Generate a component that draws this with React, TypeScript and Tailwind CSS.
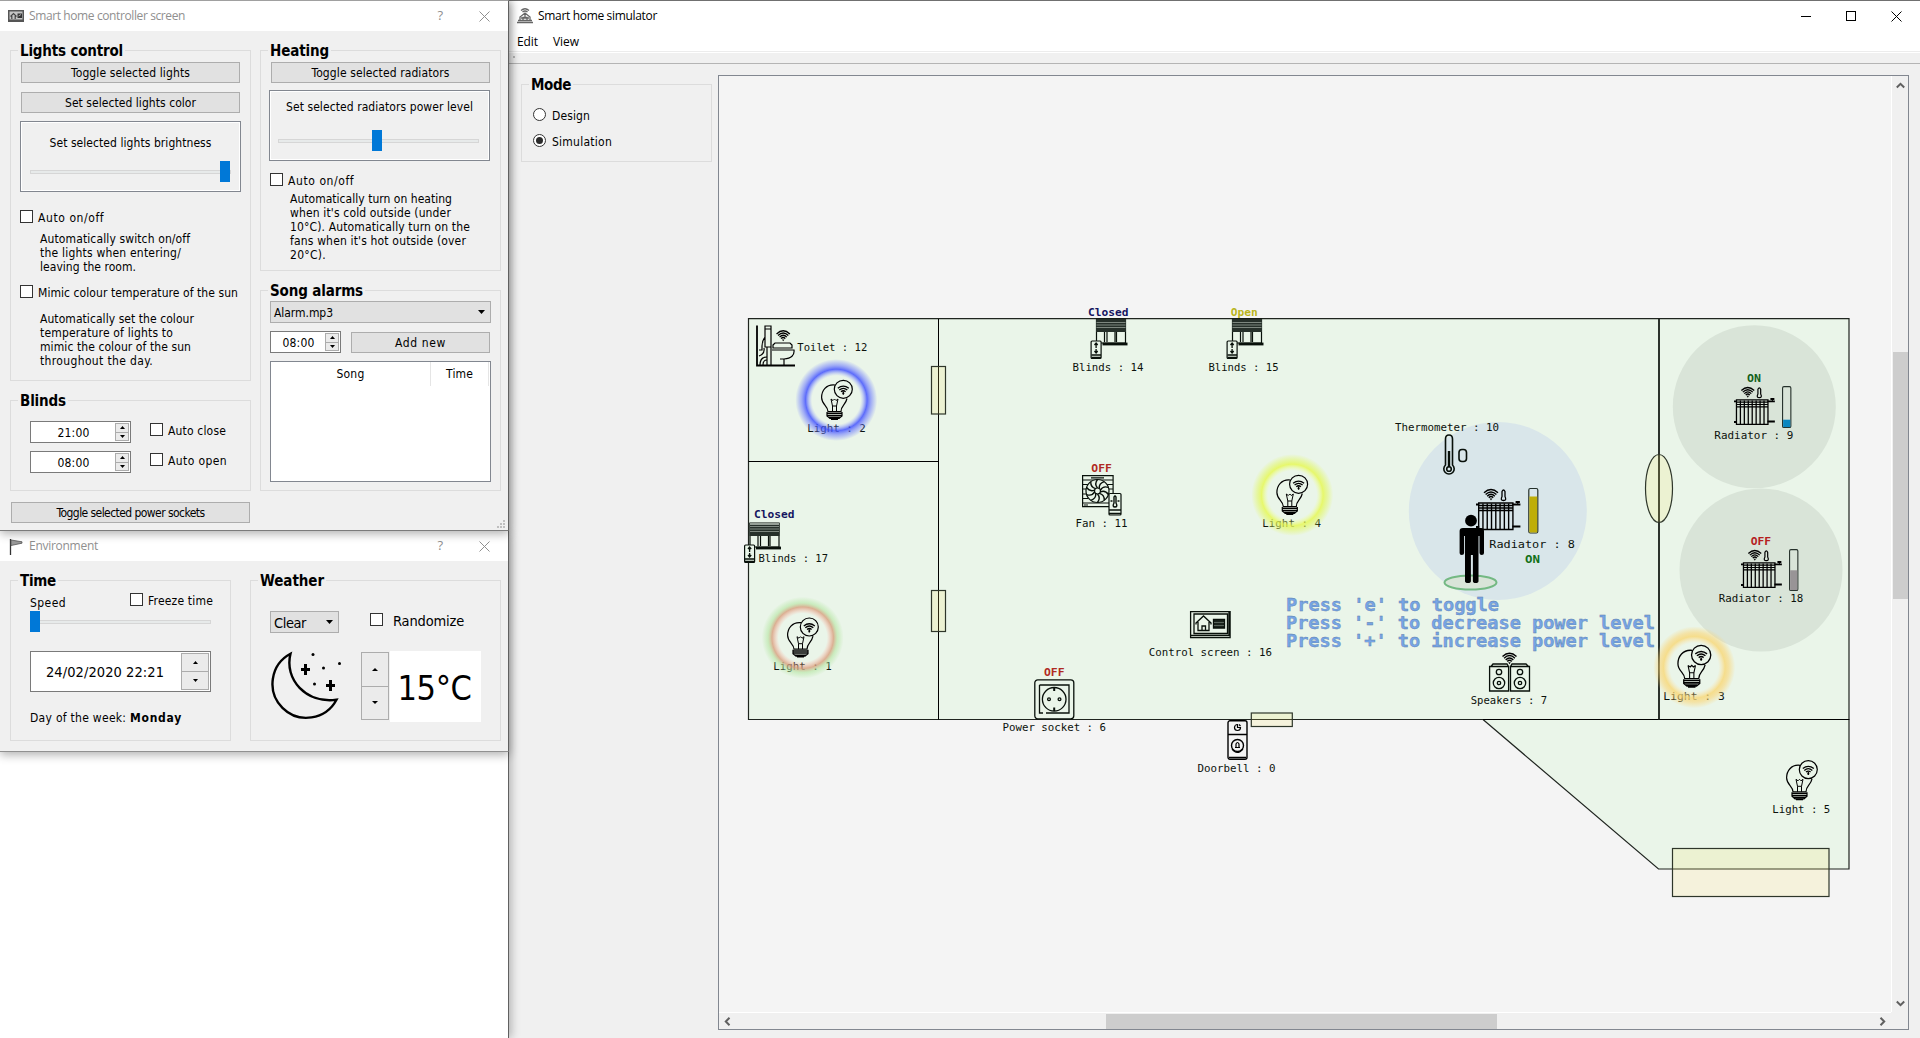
import React, { useLayoutEffect, useRef, useState } from 'react';

type Kids = { children?: React.ReactNode };

/* Text run tracked so that it fills a given width, like the hinted system font. */
function Fit({ w, className = '', children }: { w: number; className?: string; children: string }) {
  const ref = useRef<HTMLSpanElement>(null);
  const [sp, setSp] = useState(0);
  useLayoutEffect(() => {
    const el = ref.current;
    if (!el) return;
    el.style.letterSpacing = '0px';
    const nat = el.getBoundingClientRect().width;
    setSp((w - nat) / children.length);
    el.style.letterSpacing = `${(w - nat) / children.length}px`;
  }, [w, children]);
  return (
    <span ref={ref} style={{ letterSpacing: `${sp}px` }} className={`inline-block whitespace-pre ${className}`}>
      {children}
    </span>
  );
}

function Group({ title, w, className = '', children }: Kids & { title: string; w: number; className?: string }) {
  return (
    <section className={`flex flex-col items-start border border-[#dcdcdc] ${className}`}>
      <h2 className="-mt-[10px] ml-[7px] flex h-[20px] items-center bg-[#f0f0f0] px-[2px] text-[15px] font-bold leading-[20px]">
        <Fit w={w}>{title}</Fit>
      </h2>
      {children}
    </section>
  );
}

function Button({ w, className = '', children }: { w: number; className?: string; children: string }) {
  return (
    <button className={`flex h-[21px] items-center justify-center border border-[#adadad] bg-[#e1e1e1] pt-[2px] leading-[17px] ${className}`}>
      <Fit w={w}>{children}</Fit>
    </button>
  );
}

function Check({ w, className = '', gap = 'gap-[5px]', children }: { w: number; className?: string; gap?: string; children: string }) {
  return (
    <label className={`flex h-[13px] items-center ${gap} ${className}`}>
      <span className="size-[13px] shrink-0 border border-[#333] bg-white" />
      <Fit w={w} className="pt-[3px] leading-[15px]">{children}</Fit>
    </label>
  );
}

function Radio({ w, on, className = '', children }: { w: number; on?: boolean; className?: string; children: string }) {
  return (
    <label className={`flex h-[13px] items-center gap-[6px] ${className}`}>
      <span className="flex size-[13px] items-center justify-center rounded-full border border-[#333] bg-white">
        {on && <span className="size-[7px] rounded-full bg-[#2b2b2b]" />}
      </span>
      <Fit w={w} className="pt-[3px] leading-[15px]">{children}</Fit>
    </label>
  );
}

function Tri({ up, s = 5 }: { up?: boolean; s?: number }) {
  return (
    <svg width={s} height={3} viewBox="0 0 6 3" preserveAspectRatio="none">
      <path d={up ? 'M0 3h6L3 0z' : 'M0 0h6L3 3z'} fill="#000" />
    </svg>
  );
}

function Steps({ className = '', big }: { className?: string; big?: boolean }) {
  return (
    <div className={`flex flex-col border border-[#acacac] bg-[#ebebeb] ${className}`}>
      <div className="flex flex-1 items-center justify-center border-b border-[#acacac]"><Tri up s={big ? 6 : 5} /></div>
      <div className="flex flex-1 items-center justify-center"><Tri s={big ? 6 : 5} /></div>
    </div>
  );
}

function Spin({ className = '', children }: { className?: string; children: string }) {
  return (
    <div className={`flex h-[22px] border border-[#7a7a7a] bg-white p-px ${className}`}>
      <div className="flex flex-1 items-center justify-center pt-px leading-[18px]">
        <Fit w={32}>{children}</Fit>
      </div>
      <Steps className="w-[14px]" />
    </div>
  );
}

function Slider({ className = '', handle }: { className?: string; handle: string }) {
  return (
    <div className={`flex h-[21px] items-center ${className}`}>
      <div className="flex h-[4px] w-full items-center border border-[#d6d6d6] bg-[#e7eaea]">
        <div className={`h-[21px] w-[10px] shrink-0 bg-[#0078d7] ${handle}`} />
      </div>
    </div>
  );
}

function Para({ className = '', lines }: { className?: string; lines: [string, number][] }) {
  return (
    <p className={`flex flex-col ${className}`}>
      {lines.map(([t, w]) => (
        <span key={t} className="block h-[14px] leading-[14px]"><Fit w={w}>{t}</Fit></span>
      ))}
    </p>
  );
}

function CloseX({ color }: { color: string }) {
  return (
    <svg width="11" height="11" viewBox="0 0 11 11"><path d="M.5.5l10 10M10.5.5l-10 10" stroke={color} strokeWidth="1" fill="none" /></svg>
  );
}

function DialogBar({ icon, title, w }: { icon: React.ReactNode; title: string; w: number }) {
  return (
    <header className="flex h-[30px] shrink-0 items-center bg-white pl-[8px] pr-[18px] font-['Open_Sans',sans-serif] text-[12px] text-[#8f8f8f]">
      <span className="flex w-[21px]">{icon}</span>
      <Fit w={w}>{title}</Fit>
      <span className="flex-1" />
      <span className="mr-[36px] text-[13px]">?</span>
      <CloseX color="#8f8f8f" />
    </header>
  );
}

function Controller() {
  return (
    <section className="relative z-10 flex h-[531px] w-[509px] flex-col border-r border-b border-t border-r-[#606060] border-b-[#7b7b7b] border-t-[#a0a0a0] bg-[#f0f0f0] shadow-[0_3px_9px_rgba(0,0,0,0.3)]">
      <DialogBar
        title="Smart home controller screen"
        w={156}
        icon={
          <svg width="16" height="12" viewBox="0 0 16 12">
            <path d="M0 0h16v12H0z" fill="#555" />
            <path d="M1.500 1.500h13v8h-13z" fill="#c4c4c4" />
            <path d="M2.500 6.500L5.500 3.500 8.500 6.500M3.800 9V6M7.200 9V6" fill="none" stroke="#444" strokeWidth="1.200" />
            <path d="M9.500 3.500h4.500v4.500H9.500z" fill="#333" />
            <path d="M10.500 6l2.500-1.500" stroke="#aaa" />
          </svg>
        }
      />
      <div className="flex h-[499px] gap-[9px] pl-[10px] pt-[19px]">
        <div className="flex w-[241px] flex-col">
          <Group title="Lights control" w={103} className="h-[331px]">
            <Button w={119} className="ml-[10px] mt-[1px] w-[219px]">Toggle selected lights</Button>
            <Button w={131} className="ml-[10px] mt-[9px] w-[219px]">Set selected lights color</Button>
            <div className="ml-[9px] mt-[8px] flex h-[71px] w-[221px] flex-col items-center border border-[#828790] shadow-[inset_0_0_0_1px_#fff]">
              <Fit w={162} className="mt-[12px] leading-[18px]">Set selected lights brightness</Fit>
              <Slider className="mt-[9px] w-[201px]" handle="ml-[189px]" />
            </div>
            <Check w={66} className="ml-[9px] mt-[18px]">Auto on/off</Check>
            <Para className="ml-[29px] mt-[9px]" lines={[["Automatically switch on/off", 150], ["the lights when entering/", 141], ["leaving the room.", 96]]} />
            <Check w={200} className="ml-[9px] mt-[11px]">Mimic colour temperature of the sun</Check>
            <Para className="ml-[29px] mt-[14px]" lines={[["Automatically set the colour", 154], ["temperature of lights to", 133], ["mimic the colour of the sun", 151], ["throughout the day.", 113]]} />
          </Group>
          <Group title="Blinds" w={46} className="mt-[19px] h-[91px]">
            <div className="ml-[19px] mt-[10px] flex gap-[19px]">
              <Spin className="w-[101px]">21:00</Spin>
              <Check w={58} className="mt-[2px]">Auto close</Check>
            </div>
            <div className="ml-[19px] mt-[8px] flex gap-[19px]">
              <Spin className="w-[101px]">08:00</Spin>
              <Check w={59} className="mt-[2px]">Auto open</Check>
            </div>
          </Group>
          <Button w={148} className="ml-[1px] mt-[11px] w-[239px]">Toggle selected power sockets</Button>
        </div>
        <div className="flex w-[241px] flex-col">
          <Group title="Heating" w={59} className="h-[221px]">
            <Button w={138} className="ml-[10px] mt-[1px] w-[219px]">Toggle selected radiators</Button>
            <div className="ml-[8px] mt-[7px] flex h-[71px] w-[221px] flex-col items-center border border-[#828790] shadow-[inset_0_0_0_1px_#fff]">
              <Fit w={187} className="mt-[7px] leading-[18px]">Set selected radiators power level</Fit>
              <Slider className="mr-[2px] mt-[14px] w-[201px]" handle="ml-[93px]" />
            </div>
            <Check w={66} className="ml-[9px] mt-[12px]">Auto on/off</Check>
            <Para className="ml-[29px] mt-[6px]" lines={[["Automatically turn on heating", 162], ["when it's cold outside (under", 161], ["10°C). Automatically turn on the", 180], ["fans when it's hot outside (over", 176], ["20°C).", 36]]} />
          </Group>
          <Group title="Song alarms" w={93} className="mt-[19px] h-[201px]">
            <div className="ml-[9px] flex h-[22px] w-[221px] items-center justify-between border border-[#adadad] bg-[#e1e1e1] pl-[3px] pr-[5px]">
              <Fit w={59} className="pt-[2px] leading-[18px]">Alarm.mp3</Fit>
              <svg width="7" height="4" viewBox="0 0 7 4"><path d="M0 0h7L3.500 4z" /></svg>
            </div>
            <div className="ml-[9px] mt-[8px] flex gap-[10px]">
              <Spin className="w-[71px]">08:00</Spin>
              <Button w={51} className="mt-px w-[139px]">Add new</Button>
            </div>
            <div className="ml-[9px] mt-[8px] flex h-[121px] w-[221px] border border-[#828790] bg-white">
              <div className="flex h-[24px] w-[160px] items-center justify-center border-r border-[#e5e5e5]"><Fit w={28}>Song</Fit></div>
              <div className="flex h-[24px] w-[58px] items-center justify-center border-r border-[#e5e5e5]"><Fit w={27}>Time</Fit></div>
            </div>
          </Group>
          <svg className="ml-[237px] mt-[29px] shrink-0" width="8" height="8" viewBox="0 0 8 8">
            <path d="M6 0h2v2H6zM3 3h2v2H3zM6 3h2v2H6zM0 6h2v2H0zM3 6h2v2H3zM6 6h2v2H6z" fill="#bfbfbf" />
          </svg>
        </div>
      </div>
    </section>
  );
}

function Environment() {
  return (
    <section className="flex h-[221px] w-[509px] flex-col border-b border-r border-b-[#909090] border-r-[#606060] bg-[#f0f0f0] shadow-[0_3px_9px_rgba(0,0,0,0.3)]">
      <DialogBar
        title="Environment"
        w={69}
        icon={
          <svg width="16" height="17" viewBox="0 0 16 17">
            <path d="M2.500 1v16" stroke="#333" strokeWidth="1.300" />
            <path d="M3 2l11 1.800v1.400L3 7.500z" fill="#999" stroke="#555" strokeWidth=".8" />
          </svg>
        }
      />
      <div className="flex gap-[19px] pl-[10px] pt-[19px]">
        <Group title="Time" w={36} className="h-[161px] w-[221px]">
          <div className="ml-[19px] mt-[2px] flex h-[19px] items-start">
            <Fit w={36} className="mt-px leading-[18px]">Speed</Fit>
            <Check w={65} className="ml-[64px]">Freeze time</Check>
          </div>
          <Slider className="-mt-px ml-[19px] w-[181px]" handle="-ml-px" />
          <div className="ml-[19px] mt-[19px] flex h-[41px] w-[181px] border border-[#7a7a7a] bg-white p-px">
            <div className="flex flex-1 items-center pl-[14px] pt-[2px] text-[14.500px]"><Fit w={118}>24/02/2020 22:21</Fit></div>
            <Steps className="w-[28px]" />
          </div>
          <p className="ml-[19px] mt-[17px] flex leading-[18px]">
            <Fit w={100}>Day of the week: </Fit>
            <Fit w={52} className="font-bold">Monday</Fit>
          </p>
        </Group>
        <Group title="Weather" w={64} className="h-[161px] w-[251px]">
          <div className="ml-[19px] mt-[20px] flex text-[14.500px]">
            <div className="flex h-[22px] w-[69px] items-center justify-between border border-[#adadad] bg-[#e1e1e1] pl-[3px] pr-[5px]">
              <Fit w={32} className="pt-[2px] leading-[18px]">Clear</Fit>
              <svg width="7" height="4" viewBox="0 0 7 4"><path d="M0 0h7L3.500 4z" /></svg>
            </div>
            <Check w={71} gap="gap-[10px]" className="ml-[31px] mt-[2px]">Randomize</Check>
          </div>
          <div className="ml-[19px] mt-[18px] flex">
            <svg width="71" height="71" viewBox="0 0 71 71" className="shrink-0" fill="none" stroke="#000" strokeWidth="2.400">
              <path d="M20.500 2.800A34 34 0 1 0 66.500 48.800C36 53 14 28 20.500 2.800z" />
              <path d="M35.500 13v11M31 18.500h9M60.500 29v11M56 34.500h9" strokeWidth="3" />
              <g fill="#000" stroke="none"><circle cx="43" cy="3.500" r="1.500" /><circle cx="69.500" cy="12.500" r="1.500" /><circle cx="53.500" cy="17" r="1.500" /><circle cx="44.500" cy="33" r="1.500" /></g>
            </svg>
            <Steps big className="ml-[20px] mt-px h-[68px] w-[28px]" />
            <div className="ml-[1px] flex h-[71px] w-[91px] items-center justify-center bg-white pr-[2px] pt-[4px] text-[34px]"><Fit w={74}>15°C</Fit></div>
          </div>
        </Group>
      </div>
    </section>
  );
}

/* ---------- floor plan ---------- */

function L({ x, y, w, children }: { x: number; y: number; w: number; children: string }) {
  return (
    <text x={x} y={y} textLength={w} lengthAdjust="spacingAndGlyphs" className="fill-[#0c120c] font-['DejaVu_Sans_Mono',monospace] text-[10px]">
      {children}
    </text>
  );
}

function State({ x, y, w, className, children }: { x: number; y: number; w: number; className: string; children: string }) {
  return (
    <text x={x} y={y} textLength={w} lengthAdjust="spacingAndGlyphs" className={`font-['DejaVu_Sans_Mono',monospace] text-[10.500px] font-bold ${className}`}>
      {children}
    </text>
  );
}

function Wifi({ x, y, s = 1 }: { x: number; y: number; s?: number }) {
  return (
    <g transform={`translate(${x} ${y}) scale(${s})`} fill="none" stroke="#000" strokeWidth="1.400">
      <path d="M-7-2Q0-8.500 7-2M-5.400-.3Q0-5.500 5.400-.3M-3.800 1.400Q0-2.500 3.800 1.400M-2.200 3Q0 .5 2.200 3" />
      <path d="M-1.300 3.800h2.600L0 5.800z" fill="#000" stroke="none" />
    </g>
  );
}

function Bulb({ x, y, s = 1 }: { x: number; y: number; s?: number }) {
  return (
    <g transform={`translate(${x} ${y}) scale(${s})`} fill="none" stroke="#000" strokeWidth="1.200">
      <path d="M14 5C5 4 .6 11 .6 17.500c0 7 6.400 8.500 6.400 14h13c0-6 4.500-6 6-13" />
      <circle cx="22.300" cy="9.300" r="9" />
      <path d="M10 19l1.500 7v5.500M17 19l-1.500 7v5.500M10 19l2 1.500 1.500-1.500 1.500 1.500 2-1.500M11.500 26h4" strokeWidth="1" />
      <path d="M6 33.200h15M6 35.400h15M8 37.500h11" strokeWidth="1.500" />
      <path d="M6 32v4l3 2.500h9l3-2.500v-4M10 39.300h7" />
      <g transform="translate(22.300 9.800)" strokeWidth="1.300">
        <path d="M-5.500-1.500Q0-6 5.500-1.500M-4 .3Q0-3.200 4 .3M-2.300 2Q0 0 2.300 2M-1 3.600h2M0 2v3" />
      </g>
    </g>
  );
}

function Blinds({ x, y, stick = false }: { x: number; y: number; stick?: boolean }) {
  return (
    <g transform={`translate(${x} ${y})`} fill="none" stroke="#08100a" strokeWidth="1.200">
      <path d="M6 0v24h29V0zM14 13v10M16.500 13v10M24.500 13v10M26 13v10" />
      <path d="M5.500 0h30v13h-30z" fill="#26302a" stroke="none" />
      <path d="M6 3.500h29M6 6h29M6 8.500h29" stroke="#7d877f" strokeWidth="1" />
      {stick && <path d="M6 1h29" stroke="#dfe9df" />}
      <path d="M12 25h25" strokeWidth="2.800" />
      <rect x=".6" y="22" width="10" height="17.500" rx="1" fill="#e9f5e9" />
      <path d="M5.600 24v5M4 26l1.600-2 1.600 2M5.600 30v4M4 32l1.600 2 1.600-2" strokeWidth="1.300" />
      <path d="M1 36h9.500M1 38.500h9.500" strokeWidth="1.300" />
    </g>
  );
}

function Radiator({ x, y, s = 1, level, fill }: { x: number; y: number; s?: number; level: number; fill: string }) {
  return (
    <g transform={`translate(${x} ${y}) scale(${s})`} fill="none" stroke="#000">
      <g transform="scale(1.070 1)">
        <path d="M2.500 13.500h32v26.500h-32zM2.500 16h32M2.500 18.500h32M2.500 21h32" strokeWidth="1.300" />
        <path d="M6.500 14v26M10.500 14v26M14.500 14v26M18.500 14v26M22.500 14v26M26.500 14v26M30.500 14v26" strokeWidth="1.300" />
        <path d="M0 15h3M34 15h7.500M34 37h7.500M0 37.500h3M37 12.500h4" strokeWidth="2" />
        <path d="M39 12v3" />
      </g>
      <Wifi x={15} y={5.300} />
      <path d="M26 7V2q1.500-3 3 0v5q2 4-1.500 4t-1.500-4z" strokeWidth="1.300" />
      <rect x="52.800" y="-1" width="9" height="44.500" rx="1.500" strokeWidth="1.200" className="stroke-[#25302a]" />
      <rect x="53.400" y={43 - level} width="7.800" height={level} fill={fill} stroke="none" />
    </g>
  );
}

function Glow({ id, x, y, inner, mid, outer }: { id: string; x: number; y: number; inner: string; mid: string; outer: string }) {
  return (
    <>
      <radialGradient id={id}>
        <stop offset=".59" stopColor={inner} stopOpacity="0" />
        <stop offset=".75" stopColor={mid} stopOpacity=".82" />
        <stop offset=".85" stopColor={outer} stopOpacity=".55" />
        <stop offset="1" stopColor={outer} stopOpacity="0" />
      </radialGradient>
      <circle cx={x} cy={y} r="41" fill={`url(#${id})`} />
    </>
  );
}

function Plan() {
  return (
    <svg width="1172" height="936" viewBox="719 76 1172 936" className="block">
      <g fill="#eaf5e9" stroke="#1f241f" strokeWidth="1.200">
        <path d="M748.500 318.700h1100.500V719.500H748.500z" />
        <path d="M1483 719.500L1658.500 869H1849V719.500z" />
      </g>
      <g fill="none" stroke="#000">
        <path d="M938.500 319v400.500M748.500 461.500h190M1483 719.500h366" />
        <path d="M1659 319v400.500" stroke="#2c322c" strokeWidth="2" />
      </g>
      <circle cx="1497.800" cy="511" r="89" fill="#d9e6ea" />
      <circle cx="1754.300" cy="406.700" r="81.500" fill="#d9e4d8" />
      <circle cx="1761" cy="570" r="81.500" fill="#d9e4d8" />

      <g fill="rgba(250,231,100,.17)" stroke="#2e362a" strokeWidth="1.200">
        <rect x="931.500" y="366.500" width="14" height="47.500" />
        <rect x="931.500" y="590.500" width="14" height="41" />
        <rect x="1251.300" y="713" width="41" height="13.500" />
        <rect x="1672.500" y="848.500" width="156.500" height="48" />
        <ellipse cx="1659" cy="488.500" rx="13.500" ry="34" />
      </g>

      {/* toilet */}
      <g transform="translate(756 325)" fill="none" stroke="#000" strokeWidth="1.200">
        <path d="M1 .5v40h38" strokeWidth="1.800" />
        <path d="M9 1h6v21H9zM9 4h6M11 22v18M15 22v18M16 25h22q1 8-10 9h-4M28 34v6M17 20l2-2h15l2 2v3H17zM3 25h3v-4q0-5 3-9M3 31q6-2 5-8" />
        <path d="M4 40q0-8 7-8M7 40q0-5 4-5" />
      </g>
      <Wifi x={783.200} y={335.800} s={0.95} />
      <L x={797.300} y={351} w={70}>Toilet : 12</L>

      <Bulb x={821} y={380} />
      <L x={807.300} y={432.300} w={58.500}>Light : 2</L>
      <Bulb x={787} y={617.700} />
      <L x={773.300} y={670.300} w={58.500}>Light : 1</L>
      <Bulb x={1276.300} y={475} />
      <L x={1262.300} y={527.300} w={58.700}>Light : 4</L>
      <Bulb x={1677.300} y={645} s={1.07} />
      <L x={1663.300} y={700.300} w={61.500}>Light : 3</L>
      <Bulb x={1786} y={760.300} />
      <L x={1772.300} y={813.300} w={58}>Light : 5</L>
      <Glow id="g2" x={836.300} y={400} inner="#9aa6ff" mid="#3d4dff" outer="#6673ff" />
      <Glow id="g1" x={802.700} y={637.700} inner="#ffb0a0" mid="#d8a080" outer="#b0e49c" />
      <Glow id="g4" x={1292.300} y={495} inner="#eeff90" mid="#e6f850" outer="#e2f760" />
      <Glow id="g3" x={1694.300} y={667.300} inner="#ffe0a0" mid="#f8d878" outer="#fbd470" />

      <State x={754} y={518} w={40.500} className="fill-[#151560]">Closed</State>
      <Blinds x={744} y={523} stick />
      <L x={758.500} y={562.300} w={69.500}>Blinds : 17</L>
      <State x={1088} y={315.700} w={40.500} className="fill-[#151560]">Closed</State>
      <Blinds x={1090.500} y={319} />
      <L x={1072.500} y={371} w={71}>Blinds : 14</L>
      <State x={1230.700} y={315.700} w={27} className="fill-[#b9b41c]">Open</State>
      <Blinds x={1226.500} y={319} />
      <L x={1208.500} y={371} w={70}>Blinds : 15</L>

      {/* fan */}
      <State x={1091.300} y={472.300} w={20.500} className="fill-[#b02a22]">OFF</State>
      <g transform="translate(1082 475)" fill="none" stroke="#08100a" strokeWidth="1.200">
        <path d="M.6.600h30.500v31H.6zM1 5h30M1 9.500h5M25 9.500h6M1 14h3M27 14h4M1 19h3M1 23.500h5M1 28h26M9 2.800h13M2 30h4" />
        <circle cx="15.500" cy="16" r="11.500" fill="#e9f5e9" />
        <circle cx="15.500" cy="16" r="3" />
        {[0, 36, 72, 108, 144, 180, 216, 252, 288, 324].map((a) => (
          <path key={a} d="M15.500 13Q12 9 15.500 4.500" transform={`rotate(${a} 15.500 16)`} strokeWidth="1.400" />
        ))}
        <rect x="27" y="18.500" width="12" height="21.500" rx="1" fill="#e9f5e9" />
        <path d="M32 28v-6q1-2 2 0v6q2 4-1 4t-1-4zM28.500 26h2M35.500 26h2M27 35h12M27 38.500h12" strokeWidth="1.400" />
      </g>
      <L x={1075.500} y={527.300} w={52}>Fan : 11</L>

      {/* control screen */}
      <g transform="translate(1190 611)" fill="none" stroke="#08100a" strokeWidth="1.300">
        <path d="M.6.600h39.500v26H.6zM4 3h33.500v19.500H4zM.6 24.500h39.500M39 .600v24" />
        <path d="M6 12l7.500-7 7.500 7M8 11v8.500h11V11M12 19.500V15h3.500v4.500M6 13.500v-2M21 13.500v-2" />
        <path d="M23.500 8.500h11v8.500h-11z" fill="#1b241d" />
        <path d="M24 11.500h10M24 14.500h10" stroke="#6a756b" strokeWidth=".8" />
      </g>
      <L x={1148.700} y={656} w={123.300}>Control screen : 16</L>

      {/* power socket */}
      <State x={1044} y={676} w={20.500} className="fill-[#b02a22]">OFF</State>
      <g transform="translate(1034 679)" fill="none" stroke="#08100a" strokeWidth="1.300">
        <rect x=".8" y=".8" width="39" height="39" rx="3" />
        <path d="M5.500 6h29.500v28H12M9 34H5.500V6" />
        <circle cx="20.200" cy="20.300" r="11.800" />
        <circle cx="15" cy="20.300" r="1.400" />
        <circle cx="25.500" cy="20.300" r="1.400" />
        <path d="M20.200 8.500v3.500M20.200 28.500V32" strokeWidth="2" />
      </g>
      <L x={1002.500} y={731} w={103.500}>Power socket : 6</L>

      {/* doorbell */}
      <g transform="translate(1227 720)" fill="none" stroke="#000" strokeWidth="1.400">
        <rect x="1" y=".8" width="19" height="38.500" rx="2" fill="#f4f4f4" />
        <path d="M1 14.500h19M2 37.500h17" />
        <path d="M10.500 4.500a3 3 0 1 0 3 3h-3zM12 4.500l1.500 1.500" strokeWidth="1.200" />
        <circle cx="10.500" cy="25.500" r="6" />
        <path d="M8 27.500h5M9 27v-3q1.500-3 3 0v3M5 29q5 7 11 0" strokeWidth="1.200" />
      </g>
      <L x={1197.500} y={772} w={78}>Doorbell : 0</L>

      {/* thermometer */}
      <L x={1395} y={431} w={104}>Thermometer : 10</L>
      <g fill="none" stroke="#08100a" strokeWidth="1.600">
        <path d="M1445.500 465v-26q0-4 3.500-4t3.500 4v26a5.200 5.200 0 1 1-7 0z" />
        <circle cx="1449" cy="469" r="2.300" />
        <path d="M1449 451v16" strokeWidth="2.400" />
        <rect x="1459" y="449.500" width="7.500" height="12" rx="3" />
      </g>

      {/* radiators */}
      <Radiator x={1476} y={489.500} level={36} fill="#bfae08" />
      <L x={1489.300} y={548} w={85.500}>Radiator : 8</L>
      <State x={1525} y={562.700} w={15} className="fill-[#127018]">ON</State>
      <State x={1747} y={382.300} w={14} className="fill-[#12601a]">ON</State>
      <Radiator x={1734} y={387.500} s={0.92} level={8} fill="#0a86c0" />
      <L x={1714.300} y={439} w={79}>Radiator : 9</L>
      <State x={1750.700} y={545.300} w={20.500} className="fill-[#b5201e]">OFF</State>
      <Radiator x={1741} y={550.500} s={0.92} level={21.500} fill="#989496" />
      <L x={1718.700} y={602} w={84.500}>Radiator : 18</L>

      {/* speakers */}
      <Wifi x={1509.500} y={658.500} />
      <g transform="translate(1489 663)" fill="none" stroke="#08100a" strokeWidth="1.300">
        <path d="M.6 3.500h19v24.500H.6zM21.500 3.500h19v24.500h-19zM2 3.500L4 1h14l1.500 2.500M21.500 3.500L23 1h14l2.500 2.500" />
        {[10, 31].map((c) => (
          <g key={c}>
            <circle cx={c} cy="9" r="2.700" />
            <circle cx={c} cy="20" r="5.700" />
            <circle cx={c} cy="20" r="1.700" />
          </g>
        ))}
      </g>
      <L x={1470.700} y={704} w={76.500}>Speakers : 7</L>

      {/* occupant */}
      <ellipse cx="1470.500" cy="582.500" rx="26" ry="7" fill="#d9e4d8" stroke="#74b983" strokeWidth="2" />
      <circle cx="1471" cy="520.700" r="5.900" />
      <path d="M1461 528h20q3 0 3 3v22q0 2-2.200 2t-2.300-2v-17h-1v45q0 2-2.800 2t-2.800-2v-26h-2v26q0 2-2.900 2t-3-2v-45h-.9v17q0 2-2.300 2t-2.200-2v-22q0-3 3.400-3z" />

      <g className="fill-[#76a5e6] stroke-[#5d7ba8] font-['DejaVu_Sans_Mono',monospace] text-[17px] font-bold" strokeWidth=".35">
        <text x="1286" y="611" textLength="213" lengthAdjust="spacingAndGlyphs">Press 'e' to toggle</text>
        <text x="1286" y="629" textLength="369" lengthAdjust="spacingAndGlyphs">Press '-' to decrease power level</text>
        <text x="1286" y="647" textLength="369" lengthAdjust="spacingAndGlyphs">Press '+' to increase power level</text>
      </g>
    </svg>
  );
}

function Chevron({ d }: { d: string }) {
  return <svg width="9" height="9" viewBox="0 0 9 9"><path d={d} fill="none" stroke="#606060" strokeWidth="2" /></svg>;
}

function Simulator() {
  return (
    <main className="flex h-[1038px] w-[1411px] flex-col border-t border-[#707070] bg-[#f0f0f0]">
      <header className="flex h-[30px] shrink-0 items-center bg-white pl-[8px] pr-[18px] font-['Open_Sans',sans-serif] text-[12px]">
        <svg width="16" height="16" viewBox="0 0 16 16" className="mr-[5px]" fill="none" stroke="#666" strokeWidth="1.300">
          <path d="M4 2.500Q8-1 12 2.500M5.500 4Q8 2 10.500 4M3 13V9l5-4 5 4v4M0 14.500h16M1 12.500h14M6 13V9.500h4V13M8 5v4M4 10h8" />
        </svg>
        <Fit w={119}>Smart home simulator</Fit>
        <span className="flex-1" />
        <div className="flex items-center gap-[35px]">
          <span className="h-px w-[10px] bg-black" />
          <span className="size-[10px] border border-black" />
          <CloseX color="#000" />
        </div>
      </header>
      <nav className="flex h-[20px] shrink-0 items-center bg-white pl-[8px] pt-[2px] font-['Open_Sans',sans-serif] text-[12px]">
        <Fit w={21} className="mr-[15px]">Edit</Fit>
        <Fit w={26}>View</Fit>
      </nav>
      <div className="h-[2px] shrink-0 border-t border-[#ececec] bg-white" />
      <div className="h-[11px] shrink-0 border-b border-[#b4b4b4] pl-[4px] pt-[3px]"><div className="size-[2px] bg-[#b8b8b8]" /></div>
      <div className="flex pl-[12px]">
        <div className="flex w-[197px] flex-col pt-[20px]">
          <Group title="Mode" w={40} className="h-[78px] w-[191px]">
            <Radio w={38} className="ml-[11px] mt-[13px]">Design</Radio>
            <Radio w={60} on className="ml-[11px] mt-[13px]">Simulation</Radio>
          </Group>
        </div>
        <div className="mt-[11px] grid h-[955px] w-[1191px] grid-cols-[1172px_17px] grid-rows-[936px_17px] border border-[#828790] bg-[#f4f4f4]">
          <Plan />
          <div className="flex flex-col items-center border-l border-white bg-[#f0f0f0] pb-[4px] pt-[5px]">
            <Chevron d="M.8 6.500L4.500 2.800 8.200 6.500" />
            <div className="mt-[262px] h-[247px] w-[15px] bg-[#cdcdcd]" />
            <span className="flex-1" />
            <Chevron d="M.8 2.500L4.500 6.200 8.200 2.500" />
          </div>
          <div className="flex items-center border-t border-white bg-[#f0f0f0] pl-[4px] pr-[4px]">
            <Chevron d="M6.500.8L2.800 4.500 6.500 8.200" />
            <div className="ml-[374px] h-[15px] w-[391px] bg-[#cdcdcd]" />
            <span className="flex-1" />
            <Chevron d="M2.500.8L6.200 4.500 2.500 8.200" />
          </div>
          <div className="bg-[#f0f0f0]" />
        </div>
      </div>
    </main>
  );
}

export default function App() {
  return (
    <div className="flex h-[1038px] w-[1920px] overflow-hidden bg-white font-['DejaVu_Sans_Condensed','DejaVu_Sans',sans-serif] text-[12px] text-black">
      <div className="relative z-10 flex w-[509px] shrink-0 flex-col border-r border-[#606060] shadow-[2px_0_9px_rgba(0,0,0,0.28)]">
        <Controller />
        <Environment />
      </div>
      <Simulator />
    </div>
  );
}
